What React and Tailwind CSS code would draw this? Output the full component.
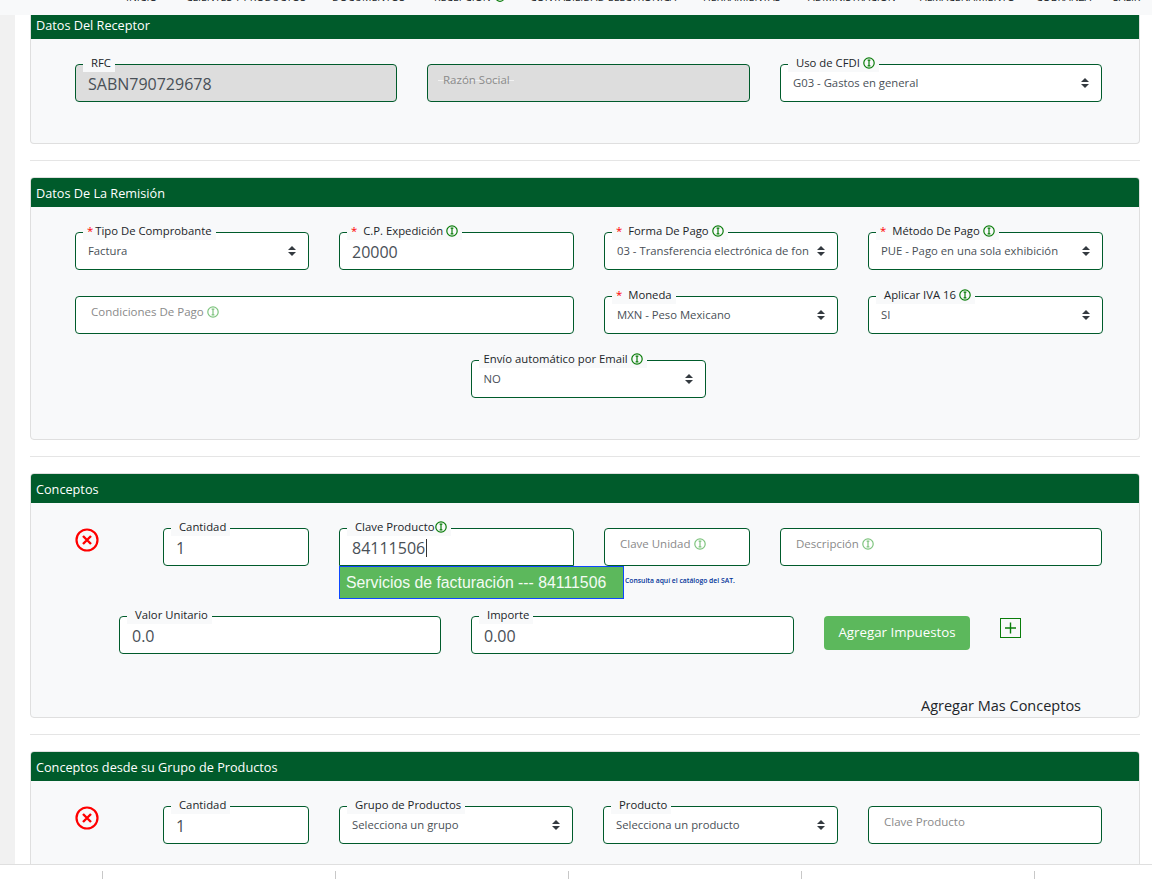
import React from "react";

const FONT = "font-['Open_Sans','Noto_Sans',sans-serif]";

function Info({ faded }) {
  const c = faded ? "#7fc47f" : "#0a7d0a";
  return (
    <svg width="12" height="12" viewBox="0 0 12 12" className="inline-block shrink-0 align-[-1px]">
      <circle cx="6" cy="6" r="5.2" fill="none" stroke={c} strokeWidth="1.2" />
      <path d="M4.6 3.2h2.8M6 3.2v5.6M4.6 8.8h2.8" stroke={c} strokeWidth="1.2" fill="none" />
    </svg>
  );
}

function Arrows() {
  return (
    <svg width="8" height="10" viewBox="0 0 8 10" className="shrink-0">
      <path d="M4 0L8 4H0zM4 10L0 6h8z" fill="#343a40" />
    </svg>
  );
}

function Legend({ label, req, info, tight, nearStar, narrow }) {
  const pad = req ? "pl-[4px]" : narrow ? "pl-[5px]" : "pl-[8px]";
  return (
    <span className={`absolute left-[7px] top-[-11px] flex h-[18px] items-center bg-[#f8f9fa] pr-[4px] text-[11.3px] leading-[18px] whitespace-nowrap text-[#212529] ${pad}`}>
      {req && <span className={`${nearStar ? "mr-[2px]" : "mr-[6px]"} text-[#ff0000]`}>*</span>}
      <span>{label}</span>
      {info && <span className={tight ? "ml-px flex" : "ml-[3px] flex"}><Info /></span>}
    </span>
  );
}

function Field({ className, label, req, info, value, gray, tight }) {
  return (
    <div className={`relative flex h-[38px] items-center rounded-[4px] border border-[#005b2b] pl-[12px] pt-[2px] text-[16px] text-[#495057] ${gray ? "bg-[#dddddd]" : "bg-white"} ${className}`}>
      <Legend label={label} req={req} info={info} tight={tight} />
      <span>{value}</span>
    </div>
  );
}

function Placeholder({ className, label, info, gray }) {
  return (
    <div className={`flex h-[38px] items-start rounded-[4px] border border-[#005b2b] pl-[15px] pt-[6px] text-[11.5px] leading-[18px] text-[#8a8a8a] ${gray ? "bg-[#dddddd]" : "bg-white"} ${className}`}>
      <span className="relative">
        {gray && <span className="absolute left-[-5px] right-[-4px] top-[9px] h-px bg-[#f2f2f2]" />}
        <span className="relative">{label}</span>
      </span>
      {info && <span className="ml-[3px] mt-[3px] flex"><Info faded /></span>}
    </div>
  );
}

function Select({ className, label, req, info, value, tight, nearStar, narrow }) {
  return (
    <div className={`relative flex h-[38px] items-center justify-between rounded-[4px] border border-[#005b2b] bg-white pl-[12px] pr-[12px] text-[11.3px] text-[#495057] ${className}`}>
      <Legend label={label} req={req} info={info} tight={tight} nearStar={nearStar} narrow={narrow} />
      <span className="mr-[8px] overflow-hidden whitespace-nowrap">{value}</span>
      <Arrows />
    </div>
  );
}

function Card({ title, className, bodyClassName, children, first }) {
  return (
    <section className={`overflow-hidden rounded-[4px] border border-[#dfdfdf] bg-[#f8f9fa] ${className}`}>
      <h2 className={`flex items-center bg-[#005b2b] pl-[5px] text-[12.7px] font-normal text-white ${first ? "h-[24px] pb-[2px]" : "h-[29px] pt-[2px]"}`}>{title}</h2>
      <div className={bodyClassName}>{children}</div>
    </section>
  );
}

function Cancel() {
  return (
    <svg width="24" height="24" viewBox="0 0 24 24" className="shrink-0">
      <circle cx="12" cy="12" r="10.5" fill="none" stroke="#ff0000" strokeWidth="2.2" />
      <path d="M8 8l8 8M16 8l-8 8" stroke="#ff0000" strokeWidth="2.4" fill="none" />
    </svg>
  );
}

function Divider() {
  return <hr className="my-[16px] h-px border-0 bg-[#e5e5e5]" />;
}

const NAV = [
  ["INICIO", "w-[60px]"],
  ["CLIENTES Y PRODUCTOS", "w-[146px]"],
  ["DOCUMENTOS", "w-[102px]"],
  ["RECEPCIÓN", "w-[96px]"],
  ["CONTABILIDAD ELECTRÓNICA", "w-[173px]"],
  ["HERRAMIENTAS", "w-[105px]"],
  ["ADMINISTRACIÓN", "w-[112px]"],
  ["ALMACENAMIENTO", "w-[116px]"],
  ["COBRANZA", "w-[77px]"],
  ["SALIR", "w-[40px]"],
];

export default function App() {
  return (
    <div className={`flex h-[879px] w-[1152px] flex-col overflow-hidden bg-white ${FONT}`}>
      <nav className="flex h-[15px] shrink-0 items-end overflow-hidden bg-[#f8f9fa] pl-[126px]">
        <div className="mb-[11px] flex text-[10.5px] leading-[14px] text-[#212529]">
          {NAV.map(([n, w]) => (
            <span key={n} className={`${w} shrink-0 whitespace-nowrap`}>
              {n}
              {n === "RECEPCIÓN" && (
                <svg width="10" height="10" viewBox="0 0 10 10" className="ml-[4px] inline-block align-[-1px]">
                  <circle cx="5" cy="5" r="4.3" fill="none" stroke="#0a7d0a" strokeWidth="1.2" />
                </svg>
              )}
            </span>
          ))}
        </div>
      </nav>
      <div className="flex min-h-0 flex-1">
        <aside className="w-[15px] shrink-0 bg-[#f1f1f1]" />
        <main className="min-w-0 flex-1 overflow-hidden pl-[15px] pr-[12px]">
          <Card first title="Datos Del Receptor" className="h-[129px] rounded-t-none border-t-0" bodyClassName="flex gap-[30px] pl-[44px] pr-[37px] pt-[25px]">
            <Field className="w-[322px]" label="RFC" value="SABN790729678" gray />
            <Placeholder className="w-[323px]" label="Razón Social" gray />
            <Select className="w-[322px]" label="Uso de CFDI" info value="G03 - Gastos en general" />
          </Card>
          <Divider />
          <Card title="Datos De La Remisión" className="h-[263px]" bodyClassName="flex flex-col gap-[26px] pl-[44px] pr-[36px] pt-[25px]">
            <div className="flex">
              <Select className="w-[234px]" label="Tipo De Comprobante" req nearStar value="Factura" />
              <Field className="ml-[30px] w-[235px]" label="C.P. Expedición" req info value="20000" />
              <Select className="ml-[30px] w-[234px]" label="Forma De Pago" req info value="03 - Transferencia electrónica de fondos" />
              <Select className="ml-[30px] w-[235px]" label="Método De Pago" req info value="PUE - Pago en una sola exhibición" />
            </div>
            <div className="flex">
              <Placeholder className="w-[499px]" label="Condiciones De Pago" info />
              <Select className="ml-[30px] w-[234px]" label="Moneda" req value="MXN - Peso Mexicano" />
              <Select className="ml-[30px] w-[235px]" label="Aplicar IVA 16" info value="SI" />
            </div>
            <div className="flex justify-center pr-[2px]">
              <Select className="w-[235px]" label="Envío automático por Email" info narrow value="NO" />
            </div>
          </Card>
          <Divider />
          <Card title="Conceptos" className="h-[245px]" bodyClassName="relative h-[215px]">
            <div className="flex pl-[44px] pr-[37px] pt-[25px]">
              <div className="w-[88px]"><Cancel /></div>
              <Field className="w-[146px]" label="Cantidad" value="1" />
              <div className="relative ml-[30px] w-[235px]">
                <div className="relative flex h-[38px] items-center rounded-[4px] rounded-b-none border border-[#005b2b] bg-white pl-[12px] pt-[2px] text-[16px] text-[#495057]">
                  <Legend label="Clave Producto" info tight />
                  <span>84111506</span>
                  <span className="ml-px h-[18px] w-px bg-[#333]" />
                </div>
              </div>
              <Placeholder className="ml-[30px] w-[146px]" label="Clave Unidad" info />
              <Placeholder className="ml-[30px] w-[322px]" label="Descripción" info />
            </div>
            <div className="absolute left-[308px] top-[63px] z-10 flex h-[33px] w-[285px] items-center border border-[#0d47ff] bg-[#5cb85c] pl-[6px] font-['Liberation_Sans',sans-serif] text-[15.8px] text-[#f3fbf3]">
              Servicios de facturación --- 84111506
            </div>
            <a className="absolute left-[594px] top-[74px] whitespace-nowrap text-[6.8px] font-semibold leading-[8px] text-[#003399]">Consulta aquí el catálogo del SAT.</a>
            <div className="mt-[50px] flex pl-[88px]">
              <Field className="w-[322px]" label="Valor Unitario" value="0.0" />
              <Field className="ml-[30px] w-[323px]" label="Importe" value="0.00" />
              <button className="ml-[30px] h-[34px] w-[146px] rounded-[4px] bg-[#5cb85c] text-[13.3px] text-white">Agregar Impuestos</button>
              <svg width="22" height="20" viewBox="0 0 22 20" className="ml-[30px] mt-[2px] shrink-0">
                <rect x="0.5" y="0.5" width="20" height="19" fill="none" stroke="#0a7d0a" />
                <path d="M5 10h11M10.5 4.5v11" stroke="#0a7d0a" strokeWidth="1.4" />
              </svg>
            </div>
            <div className="absolute left-[890px] top-[193px] text-[14.5px] leading-[20px] text-[#212529]">Agregar Mas Conceptos</div>
          </Card>
          <Divider />
          <Card title="Conceptos desde su Grupo de Productos" className="h-[140px]" bodyClassName="flex pl-[44px] pr-[36px] pt-[25px]">
            <div className="w-[88px]"><Cancel /></div>
            <Field className="w-[146px]" label="Cantidad" value="1" />
            <Select className="ml-[30px] w-[234px]" label="Grupo de Productos" value="Selecciona un grupo" />
            <Select className="ml-[30px] w-[235px]" label="Producto" value="Selecciona un producto" />
            <Placeholder className="ml-[30px] w-[234px]" label="Clave Producto" />
          </Card>
        </main>
      </div>
      <footer className="flex h-[15px] shrink-0 border-t border-[#dfdfdf] bg-white pl-[102px]">
        {[0, 1, 2, 3, 4].map((i) => (
          <div key={i} className="mt-[6px] h-[9px] w-[233px] shrink-0 border-l border-[#c8c8c8]" />
        ))}
      </footer>
    </div>
  );
}
